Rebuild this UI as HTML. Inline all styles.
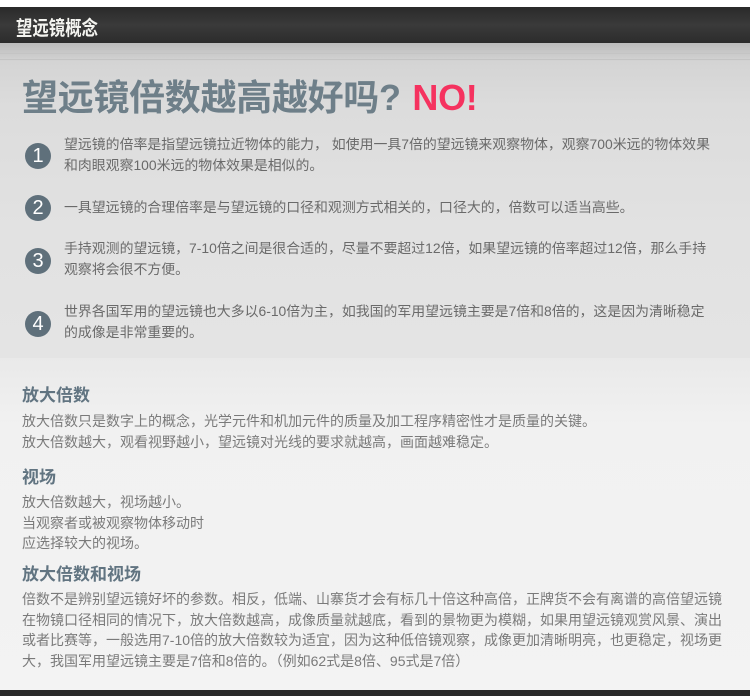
<!DOCTYPE html>
<html><head><meta charset="utf-8"><style>
*{margin:0;padding:0}
body{width:750px;height:696px;position:relative;overflow:hidden;background:#fff;font-family:"Liberation Sans","Noto Sans CJK SC",sans-serif}
.hd{position:absolute;left:0;top:7px;width:750px;height:36px;background:linear-gradient(#2a2a2a,#3a3a3a 50%,#2c2c2c);}
.hd span{position:absolute;left:16px;top:5px;font-size:20px;font-weight:bold;color:#f4f4f0;transform:scaleX(0.82);transform-origin:left}
.up{position:absolute;left:0;top:43px;width:750px;height:315px;background:linear-gradient(#bcbcbc,#d4d4d4 6%,#dcdcdc 20%,#e2e2e2 60%,#e4e4e4)}
.str{position:absolute;left:0;width:750px;height:1px;background:#c4c4c4}
.title{position:absolute;left:22px;top:69px;font-size:36px;font-weight:bold;color:#6e7f89;white-space:nowrap;letter-spacing:-0.3px}
.title b{color:#f5325f;font-weight:bold;margin-left:2px}
.c{position:absolute;left:25px;width:26px;height:26px;border-radius:50%;background:#5f707b;color:#fff;font-size:20px;line-height:26px;text-align:center}
.t{position:absolute;left:64px;font-size:13.9px;line-height:20.5px;color:#6a6a6a;white-space:nowrap}
.lo{position:absolute;left:0;top:358px;width:750px;height:332px;background:linear-gradient(#e9e9e9,#f1f1f1 20%,#f3f3f3)}
.h{position:absolute;left:22px;font-size:17px;font-weight:bold;color:#617481}
.p{position:absolute;left:22px;font-size:14px;line-height:20.7px;color:#7a7a7a;white-space:nowrap}
.ft{position:absolute;left:0;top:690px;width:750px;height:6px;background:#2a2a2a}
</style></head><body>
<div class="hd"><span>望远镜概念</span></div>
<div class="up"></div>
<div class="str" style="top:48px"></div><div class="str" style="top:53px"></div><div class="str" style="top:59px"></div>
<div class="title">望远镜倍数越高越好吗? <b>NO!</b></div>
<div class="c" style="top:143px">1</div>
<div class="t" style="top:134px">望远镜的倍率是指望远镜拉近物体的能力， 如使用一具7倍的望远镜来观察物体，观察700米远的物体效果<br>和肉眼观察100米远的物体效果是相似的。</div>
<div class="c" style="top:195px">2</div>
<div class="t" style="top:197px">一具望远镜的合理倍率是与望远镜的口径和观测方式相关的，口径大的，倍数可以适当高些。</div>
<div class="c" style="top:248px">3</div>
<div class="t" style="top:238px">手持观测的望远镜，7-10倍之间是很合适的，尽量不要超过12倍，如果望远镜的倍率超过12倍，那么手持<br>观察将会很不方便。</div>
<div class="c" style="top:311px">4</div>
<div class="t" style="top:301px">世界各国军用的望远镜也大多以6-10倍为主，如我国的军用望远镜主要是7倍和8倍的，这是因为清晰稳定<br>的成像是非常重要的。</div>
<div class="lo"></div>
<div class="h" style="top:381px">放大倍数</div>
<div class="p" style="top:411px">放大倍数只是数字上的概念，光学元件和机加元件的质量及加工程序精密性才是质量的关键。<br>放大倍数越大，观看视野越小，望远镜对光线的要求就越高，画面越难稳定。</div>
<div class="h" style="top:463px">视场</div>
<div class="p" style="top:492px">放大倍数越大，视场越小。<br>当观察者或被观察物体移动时<br>应选择较大的视场。</div>
<div class="h" style="top:560px">放大倍数和视场</div>
<div class="p" style="top:589px">倍数不是辨别望远镜好坏的参数。相反，低端、山寨货才会有标几十倍这种高倍，正牌货不会有离谱的高倍望远镜<br>在物镜口径相同的情况下，放大倍数越高，成像质量就越底，看到的景物更为模糊，如果用望远镜观赏风景、演出<br>或者比赛等，一般选用7-10倍的放大倍数较为适宜，因为这种低倍镜观察，成像更加清晰明亮，也更稳定，视场更<br>大，我国军用望远镜主要是7倍和8倍的。（例如62式是8倍、95式是7倍）</div>
<div class="ft"></div>
</body></html>
